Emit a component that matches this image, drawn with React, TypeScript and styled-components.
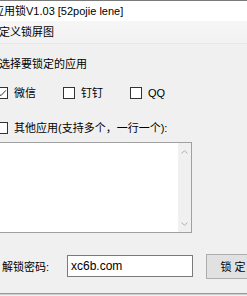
import React from "react";
import styled, { createGlobalStyle } from "styled-components";

const GlobalStyle = createGlobalStyle`
  html, body {
    margin: 0;
    padding: 0;
    background: #f0f0f0;
    overflow: hidden;
  }
  body {
    width: 247px;
    height: 296px;
    font-family: "Liberation Sans", "Noto Sans CJK SC", sans-serif;
    font-size: 11px;
    color: #000;
  }
`;

// the window is cropped on the left, so shift it a bit
const Window = styled.div`
  box-sizing: border-box;
  width: 300px;
  height: 296px;
  margin-left: -12px;
  display: flex;
  flex-direction: column;
  border-top: 1px solid #7a7a7a;
  background: #f0f0f0;
`;

const TitleBar = styled.div`
  height: 20px;
  line-height: 20px;
  padding-left: 5px;
  background: #fff;
  white-space: nowrap;
`;

const TabStrip = styled.div`
  height: 22px;
  line-height: 22px;
  padding-left: 11px;
  background: linear-gradient(#f6f6f6, #f2f2f2);
  border-bottom: 1px solid #e8e8e8;
`;

const Body = styled.div`
  display: flex;
  flex-direction: column;
  padding-left: 8px;
`;

const SectionLabel = styled.div`
  margin-top: 12px;
  padding-left: 3px;
  line-height: 16px;
`;

const CheckRow = styled.div<{ $gap: number }>`
  display: grid;
  grid-template-columns: repeat(3, 67px);
  margin-top: ${(p) => p.$gap}px;
  line-height: 16px;
`;

const CheckItem = styled.label`
  display: flex;
  align-items: center;
  gap: 6px;
  white-space: nowrap;
`;

const Box = styled.span`
  box-sizing: border-box;
  flex-shrink: 0;
  width: 12px;
  height: 12px;
  border: 1px solid #333;
  background: #fff;
  display: flex;
  align-items: center;
  justify-content: center;
`;

const Memo = styled.div`
  box-sizing: border-box;
  margin-top: 6px;
  width: 196px;
  height: 91px;
  border: 1px solid #a0a0a0;
  background: #fff;
  display: flex;
  justify-content: flex-end;
`;

const ScrollTrack = styled.div`
  width: 13px;
  background: #f0f0f0;
  display: flex;
  flex-direction: column;
  justify-content: space-between;
  align-items: center;
  padding: 7px 0 6px;
`;

const PassRow = styled.div`
  display: flex;
  align-items: center;
  margin-top: 20px;
  height: 26px;
`;

const PassLabel = styled.span`
  width: 65px;
  padding-left: 6px;
  white-space: nowrap;
`;

const Input = styled.div`
  box-sizing: border-box;
  width: 126px;
  height: 22px;
  border: 1px solid #7a7a7a;
  background: #fff;
  font-size: 12px;
  line-height: 20px;
  padding-left: 3px;
`;

const Button = styled.div`
  box-sizing: border-box;
  margin-left: 13px;
  width: 54px;
  height: 25px;
  border: 1px solid #adadad;
  background: #e1e1e1;
  display: flex;
  align-items: center;
  justify-content: center;
  white-space: pre;
`;

const Footer = styled.div`
  margin-top: 14px;
  border-top: 1px solid #9a9a9a;
  border-bottom: 1px solid #cfcfcf;
`;

const Check = ({ checked, label }: { checked?: boolean; label: string }) => (
  <CheckItem>
    <Box>
      {checked && (
        <svg width="10" height="10" viewBox="0 0 10 10">
          <path d="M1.5 5.2 L4 7.6 L8.8 2.4" fill="none" stroke="#333" strokeWidth="1" />
        </svg>
      )}
    </Box>
    {label}
  </CheckItem>
);

const Arrow = ({ up }: { up?: boolean }) => (
  <svg width="7" height="4" viewBox="0 0 7 4">
    <path
      d={up ? "M0.5 3.5 L3.5 0.7 L6.5 3.5" : "M0.5 0.5 L3.5 3.3 L6.5 0.5"}
      fill="none"
      stroke="#b0b0b0"
      strokeWidth="1"
    />
  </svg>
);

export default function App() {
  return (
    <>
      <GlobalStyle />
      <Window>
        <TitleBar>应用锁V1.03 [52pojie lene]</TitleBar>
        <TabStrip>定义锁屏图</TabStrip>
        <Body>
          <SectionLabel>选择要锁定的应用</SectionLabel>
          <CheckRow $gap={13}>
            <Check checked label="微信" />
            <Check label="钉钉" />
            <Check label="QQ" />
          </CheckRow>
          <CheckRow $gap={19}>
            <Check label="其他应用(支持多个，一行一个):" />
          </CheckRow>
          <Memo>
            <ScrollTrack>
              <Arrow up />
              <Arrow />
            </ScrollTrack>
          </Memo>
          <PassRow>
            <PassLabel>解锁密码:</PassLabel>
            <Input>xc6b.com</Input>
            <Button>锁 定</Button>
          </PassRow>
        </Body>
        <Footer />
      </Window>
    </>
  );
}
